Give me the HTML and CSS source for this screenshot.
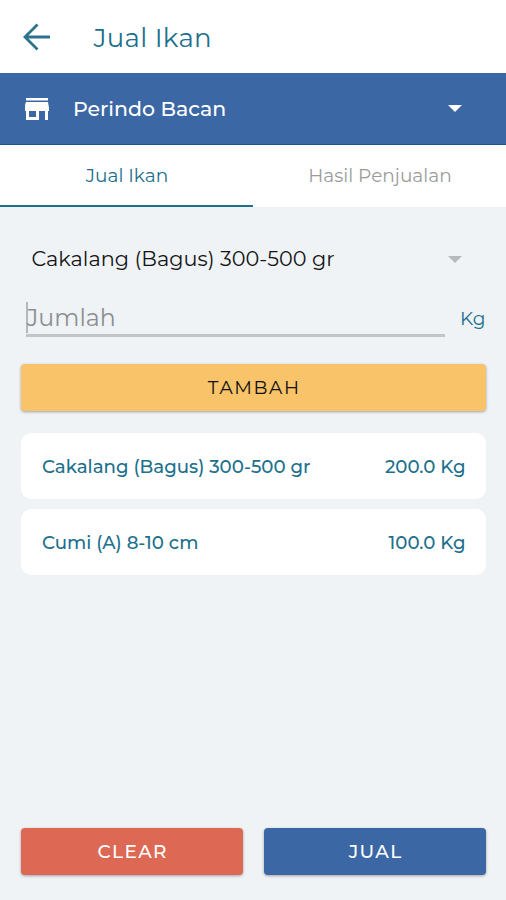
FILE: index.html
```html
<!DOCTYPE html>
<html lang="id">
<head>
<meta charset="utf-8">
<title>Jual Ikan</title>
<link rel="stylesheet" href="styles.css">
</head>
<body>
<header class="topbar">
  <svg class="back" viewBox="0 0 28 28"><path d="M27 14H2M14.500 1.500L2 14l12.500 12.500"/></svg>
  <h1 class="title">Jual Ikan</h1>
</header>
<div class="store">
  <svg class="store-icon" viewBox="0 0 24 22"><path fill-rule="evenodd" d="M1 0h22v2.500H1zM1 4h22l1 6v3h-1v9h-3v-9h-6v9H1v-9H0v-6zM4 13v6h7v-6z"/></svg>
  <span class="store-name">Perindo Bacan</span>
  <i class="caret light"></i>
</div>
<nav class="tabs">
  <a class="tab active"><span>Jual Ikan</span></a>
  <a class="tab"><span>Hasil Penjualan</span></a>
</nav>
<main class="content">
  <div class="select"><span>Cakalang (Bagus) 300-500 gr</span><i class="caret"></i></div>
  <div class="amount">
    <div class="field"><span>Jumlah</span></div>
    <span class="unit">Kg</span>
  </div>
  <button class="btn add"><span>TAMBAH</span></button>
  <ul class="list">
    <li class="card"><span>Cakalang (Bagus) 300-500 gr</span><span>200.0 Kg</span></li>
    <li class="card"><span>Cumi (A) 8-10 cm</span><span>100.0 Kg</span></li>
  </ul>
  <footer class="actions">
    <button class="btn clear"><span>CLEAR</span></button>
    <button class="btn sell"><span>JUAL</span></button>
  </footer>
</main>
</body>
</html>
```
FILE: styles.css
```css
* { box-sizing: border-box; }
body { margin: 0; height: 900px; display: flex; flex-direction: column; background: #eff3f6; font-family: Montserrat, Inter, sans-serif; color: #206f8c; }
.topbar { height: 73px; background: #fff; display: flex; align-items: center; padding-left: 23px; }
.back { width: 28px; height: 28px; fill: none; stroke: #2c748d; stroke-width: 2.8; }
.title { margin: 2px 0 0 42.500px; font-size: 26px; font-weight: 400; line-height: 32px; letter-spacing: .3px; }
.store { height: 72px; background: #3b67a4; border-bottom: 1px solid #165596; color: #fff; display: flex; align-items: center; padding: 0 44px 0 25px; }
.store-icon { width: 24px; height: 22px; fill: #fff; }
.store-name { margin-left: 24px; font-size: 20.500px; font-weight: 500; }
.caret { margin-left: auto; border: 7px solid transparent; border-top: 7px solid #b7babc; border-bottom: 0; }
.light { border-top-color: #fff; }
.tabs { height: 62px; background: #fff; display: flex; }
.tab { flex: 1; display: flex; align-items: center; justify-content: center; padding: 1px 0 0 1px; font-size: 18.500px; color: #9b9b9b; border-bottom: 2px solid transparent; }
.active { color: #206f8c; border-color: #206f8c; }
.content { flex: 1; display: flex; flex-direction: column; padding: 30px 20px 25px 21px; }
.select { height: 44px; display: flex; align-items: center; padding: 0 24px 0 10.500px; font-size: 20.800px; color: #151515; }
.select span { white-space: nowrap; margin-bottom: 2px; }
.amount { height: 83px; display: flex; }
.field { flex: none; width: 419px; height: 56px; margin-left: 5px; padding-top: 20px; border-bottom: 3px solid #c1c5c8; font-size: 23.700px; color: #8b9092; display: flex; align-items: center; }
.field::before { content: ""; width: 2px; height: 31px; margin-right: -1.500px; background: #b3b8bb; }
.unit { margin: 26px 0 0 15px; font-size: 18.500px; }
.btn { border: 0; border-radius: 4px; height: 47px; font: 500 18.500px Montserrat, Inter, sans-serif; letter-spacing: 1.4px; color: #fff; box-shadow: 0 1px 3px #0005; }
.btn span { margin-right: -1.400px; }
.add { background: #f8c369; color: #111; font-weight: 400; letter-spacing: 1.6px; }
.list { list-style: none; margin: 22px 0 0; padding: 0; display: grid; gap: 10px; }
.card { height: 66px; background: #fff; border-radius: 10px; display: flex; align-items: center; justify-content: space-between; padding: 1px 20.500px 0 21px; font-size: 18.200px; font-weight: 500; }
.card:last-child { padding-top: 0; }
.actions { margin-top: auto; display: grid; grid-template-columns: 1fr 1fr; gap: 21px; }
.clear { background: #dd6854; }
.sell { background: #3b67a4; }
```
